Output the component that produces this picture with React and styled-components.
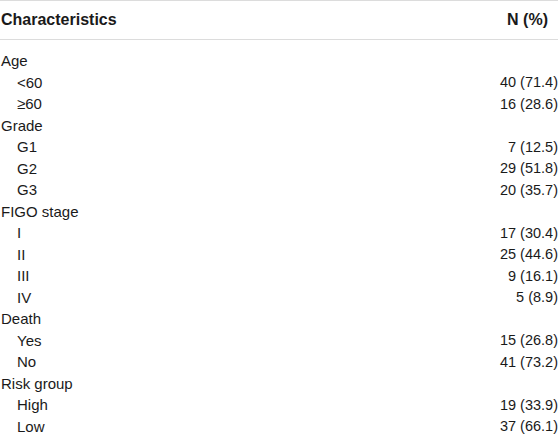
import React from 'react';
import styled, { createGlobalStyle } from 'styled-components';

const Global = createGlobalStyle`
  body {
    margin: 0;
    background: #fff;
    font-family: "Liberation Sans", Arial, sans-serif;
    color: #1a1a1a;
  }
`;

const Table = styled.div`
  width: 558px;
  height: 436px;
  overflow: hidden;
`;

const Head = styled.div`
  display: flex;
  justify-content: space-between;
  align-items: center;
  height: 38px;
  border-top: 1px solid #dcdcdc;
  border-bottom: 1px solid #dcdcdc;
  font-weight: 700;
  font-size: 16px;
  padding: 0 10px 0 1px;
`;

const Body = styled.div`
  padding-top: 10px;
`;

const Row = styled.div`
  display: flex;
  justify-content: space-between;
  align-items: center;
  height: 21.5px;
  font-size: 15px;
  padding-left: ${p => (p.$sub ? '17px' : '1px')};
`;

const Value = styled.span`
  font-size: 14.5px;
`;

const rows = [
  ['Age'],
  ['<60', '40 (71.4)'],
  ['≥60', '16 (28.6)'],
  ['Grade'],
  ['G1', '7 (12.5)'],
  ['G2', '29 (51.8)'],
  ['G3', '20 (35.7)'],
  ['FIGO stage'],
  ['I', '17 (30.4)'],
  ['II', '25 (44.6)'],
  ['III', '9 (16.1)'],
  ['IV', '5 (8.9)'],
  ['Death'],
  ['Yes', '15 (26.8)'],
  ['No', '41 (73.2)'],
  ['Risk group'],
  ['High', '19 (33.9)'],
  ['Low', '37 (66.1)'],
];

export default function App() {
  return (
    <Table>
      <Global />
      <Head>
        <span>Characteristics</span>
        <span>N (%)</span>
      </Head>
      <Body>
        {rows.map(([label, value]) => (
          <Row key={label} $sub={value !== undefined}>
            <span>{label}</span>
            {value && <Value>{value}</Value>}
          </Row>
        ))}
      </Body>
    </Table>
  );
}
